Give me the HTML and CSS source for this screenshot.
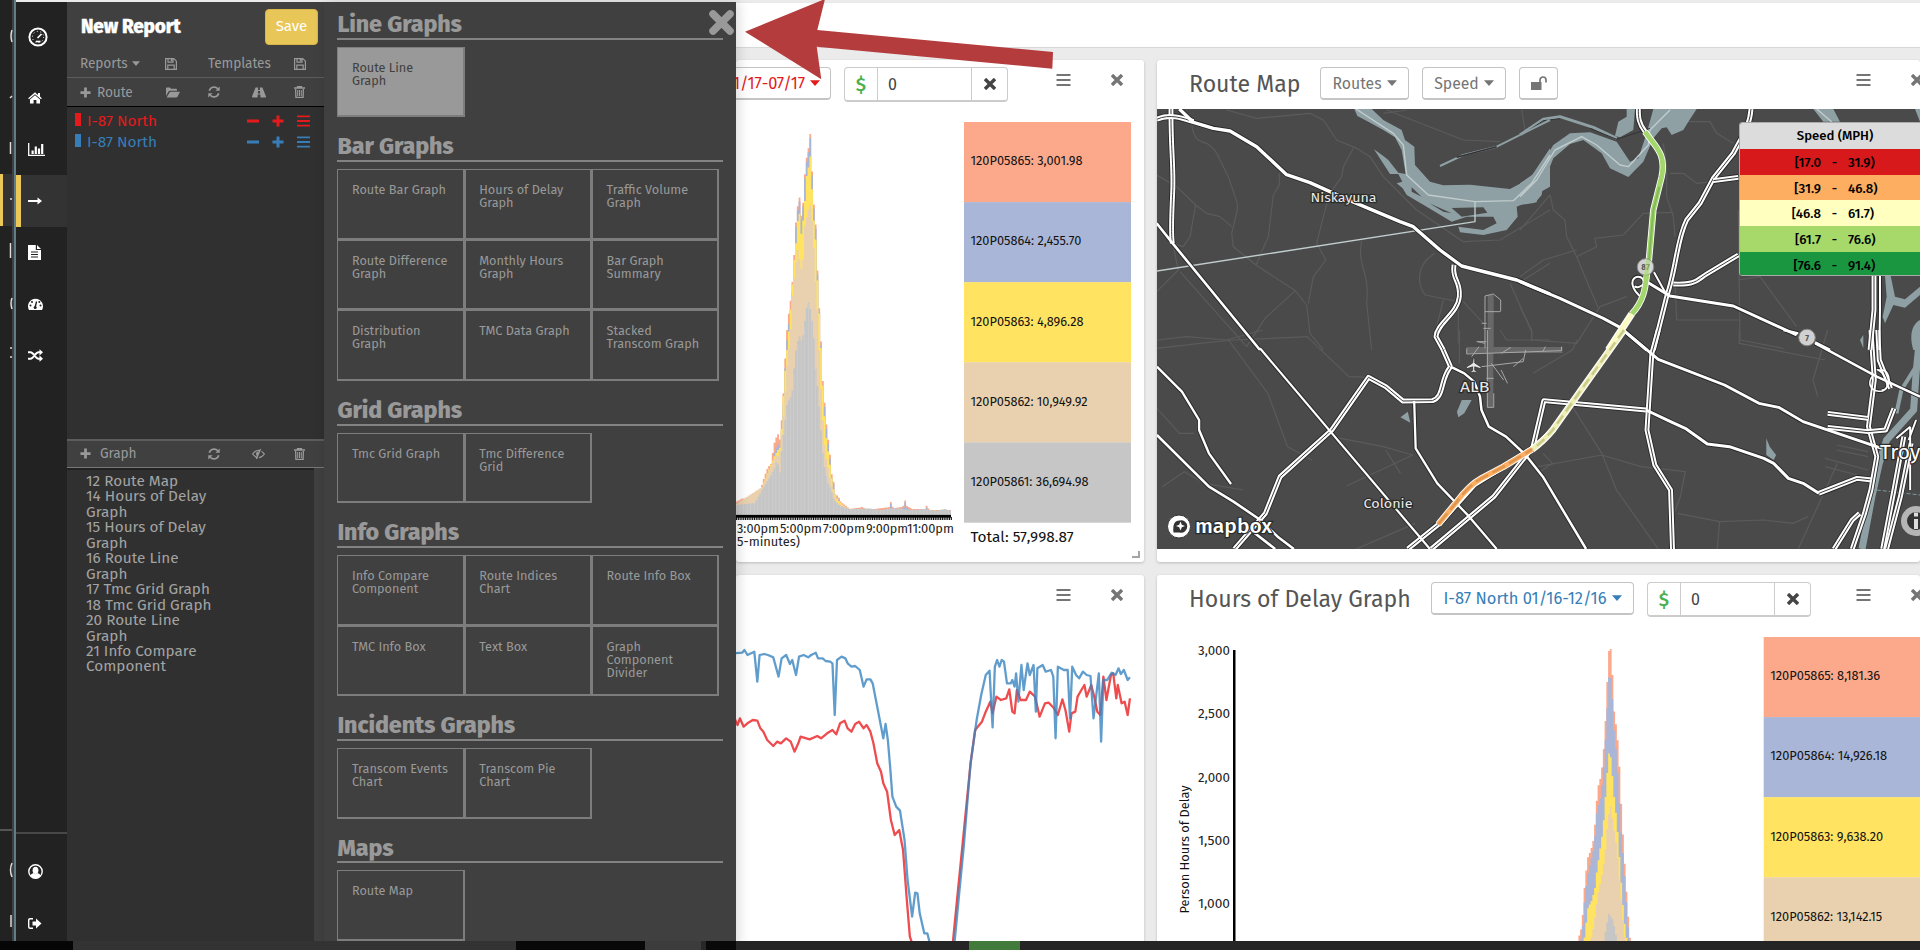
FILE: index.html
```html
<!DOCTYPE html>
<html lang="en">
<head>
<meta charset="utf-8">
<title>New Report</title>
<link rel="stylesheet" href="styles.css">
</head>
<body>
<svg class="defs" width="0" height="0">
  <symbol id="times" viewBox="0 0 12 12"><path d="M2.2 2.2 9.8 9.8M9.8 2.2 2.2 9.8" stroke="currentColor" stroke-width="3.4" stroke-linecap="square" fill="none"/></symbol>
  <symbol id="bars" viewBox="0 0 14 12"><path d="M0 1h14M0 6h14M0 11h14" stroke="currentColor" stroke-width="2"/></symbol>
  <symbol id="plus" viewBox="0 0 12 12"><path d="M6 .5v11M.5 6h11" stroke="currentColor" stroke-width="3"/></symbol>
  <symbol id="minus" viewBox="0 0 12 12"><path d="M0 6h12" stroke="currentColor" stroke-width="3"/></symbol>
  <symbol id="caret" viewBox="0 0 10 6"><path d="M0 .3h10L5 6z" fill="currentColor"/></symbol>
  <symbol id="save" viewBox="0 0 12 12"><path d="M.6.6h8.2l2.6 2.6v8.2H.6zM3 .8v3.4h5V.8M2.8 11.2V7.2h6.4v4" fill="none" stroke="currentColor" stroke-width="1.2"/><path d="M5.8.8h1.6v2.6H5.8z" fill="currentColor"/></symbol>
  <symbol id="folder" viewBox="0 0 14 11"><path d="M0 9V1.4Q0 .5 1 .5h3l1 1.3h5q1 0 1 1v1H4Q3 3.800 2.400 4.800z M.6 10.500 3.500 5.500Q3.900 4.800 4.700 4.800H14L11.500 9.700Q11 10.500 10 10.500z" fill="currentColor"/></symbol>
  <symbol id="refresh" viewBox="0 0 12 12"><path d="M1.300 4.800A4.900 4.900 0 0 1 9.700 2.700M10.700 7.200A4.900 4.900 0 0 1 2.300 9.300" fill="none" stroke="currentColor" stroke-width="1.700"/><path d="M11.700.5v4.300H7.400zM.3 11.500V7.200h4.300z" fill="currentColor"/></symbol>
  <symbol id="road" viewBox="0 0 14 11"><path d="M3.600.5h2.600L6 3h2L7.800.5h2.600L14 9.500q.2 1-.8 1H8.500L8.300 7.500H5.700l-.2 3H.8q-1 0-.8-1zM6 4l-.2 2.500h2.400L8 4z" fill="currentColor" fill-rule="evenodd"/></symbol>
  <symbol id="trash" viewBox="0 0 11 12"><path d="M0 2h11M3.500 2V.7h4V2M1.600 3l.3 8.300h7.200L9.400 3" fill="none" stroke="currentColor" stroke-width="1.300"/><path d="M3.700 4v6M5.500 4v6M7.300 4v6" stroke="currentColor"/></symbol>
  <symbol id="eye" viewBox="0 0 13 10"><path d="M.6 5Q3.500 1.300 6.500 1.300T12.400 5Q9.500 8.700 6.500 8.700T.6 5z" fill="none" stroke="currentColor" stroke-width="1.200"/><path d="M4 5a2.500 2.500 0 0 1 3-2.400L5.500 7.300A2.500 2.500 0 0 1 4 5z" fill="currentColor"/><path d="M9.800-.2 5.700 10.200" stroke="#404040" stroke-width="1.300"/><path d="M8.500 0 4.400 10" stroke="currentColor" stroke-width="1.200"/></symbol>
  <symbol id="unlock" viewBox="0 0 16 14"><path d="M0 6h10.500v8H0z" fill="currentColor"/><path d="M9 6.500V4a3 3 0 0 1 6 0v2.600" fill="none" stroke="currentColor" stroke-width="1.700"/></symbol>
  <symbol id="clock" viewBox="0 0 20 20"><circle cx="10" cy="10" r="8.600" fill="none" stroke="currentColor" stroke-width="2"/><path d="M9.500 11 13.500 7" stroke="currentColor" stroke-width="1.600"/><path d="M8 14.500h4.500" stroke="currentColor" stroke-width="1.600"/><circle cx="10" cy="10" r="5.600" fill="none" stroke="currentColor" stroke-dasharray="1 2.500"/></symbol>
  <symbol id="home" viewBox="0 0 14 12"><path d="M7 .3 10 2.900V1h2v3.600L13.800 6.200l-.8 1L7 2.200 1 7.200l-.8-1zM7 3.200 12 7.400V11.500H8.400V8H5.600v3.500H2V7.400z" fill="currentColor"/></symbol>
  <symbol id="chart" viewBox="0 0 17 13"><path d="M.7 0v12.300H17" fill="none" stroke="currentColor" stroke-width="1.300"/><path d="M3.500 7.500h2.200V11H3.500zM6.700 3.500h2.200V11H6.700zM9.900 5.500h2.200V11H9.900zM13.100 1h2.200v10h-2.200z" fill="currentColor"/></symbol>
  <symbol id="arrow" viewBox="0 0 14 8"><path d="M0 2.900h9.500V.5L14 4 9.500 7.500V5.100H0z" fill="currentColor"/></symbol>
  <symbol id="file" viewBox="0 0 13 15"><path d="M0 0h7.800v5H13v10H0zM9 0l4 4H9zM3 6.500v1h7v-1zM3 9v1h7V9zM3 11.500v1h7v-1z" fill="currentColor" fill-rule="evenodd"/></symbol>
  <symbol id="dash" viewBox="0 0 15 12"><path d="M1 12A7.500 7.500 0 1 1 14 12z" fill="currentColor"/><path d="M7.200 9 8.600 3.500" stroke="#222" stroke-width="1.400"/><g fill="#222"><circle cx="7.200" cy="9.500" r="1.500"/><circle cx="2.500" cy="7.600" r="1"/><circle cx="4" cy="4" r="1"/><circle cx="12.500" cy="7.600" r="1"/><circle cx="11.300" cy="4" r="1"/></g></symbol>
  <symbol id="shuffle" viewBox="0 0 15 13"><path d="M0 3.300h2.500C6 3.300 7 9.700 10.500 9.700H12M0 9.700h2.500C6 9.700 7 3.300 10.500 3.300H12" fill="none" stroke="currentColor" stroke-width="2"/><path d="M11.500.2 15 3.300 11.500 6.400zM11.500 6.600 15 9.700l-3.500 3.100z" fill="currentColor"/></symbol>
  <symbol id="user" viewBox="0 0 15 15"><circle cx="7.500" cy="7.500" r="6.700" fill="none" stroke="currentColor" stroke-width="1.400"/><ellipse cx="7.500" cy="6.300" rx="2.900" ry="3.600" fill="currentColor"/><path d="M2.300 12Q3 9.300 5.500 9L7.500 10.200 9.500 9q2.500.3 3.200 3Q10 14.800 7.500 14.500T2.300 12z" fill="currentColor"/></symbol>
  <symbol id="exit" viewBox="0 0 14 11"><path d="M5 .7H2.200Q.7.700.7 2.200v6.600q0 1.500 1.500 1.500H5" fill="none" stroke="currentColor" stroke-width="1.400"/><path d="M4.500 3.500H8V.5l5.500 5L8 10.500v-3H4.500z" fill="currentColor"/></symbol>
</svg>

<div class="app">
  <div class="ghost">
    <i class="ghost-active"></i><i class="ghost-line"></i>
    <svg viewBox="0 0 15 950" width="15" height="950"><path d="M12 30q-2 6 0 12M12 96l-2 2M10.500 142v12M10 199h2M10.500 243v15M12 298q-2 5 0 11M10 348h2M10 357h2M12 863q-3 7 0 14M11 915v12" stroke="#ddd" stroke-width="1.500" fill="none"/></svg>
  </div>
  <nav class="rail">
    <a class="rail-item r-logo"><svg width="20" height="20"><use href="#clock"/></svg></a>
    <a class="rail-item"><svg width="14" height="12"><use href="#home"/></svg></a>
    <a class="rail-item"><svg width="17" height="13"><use href="#chart"/></svg></a>
    <a class="rail-item active"><svg width="14" height="8"><use href="#arrow"/></svg></a>
    <a class="rail-item"><svg width="13" height="15"><use href="#file"/></svg></a>
    <a class="rail-item"><svg width="15" height="12"><use href="#dash"/></svg></a>
    <a class="rail-item"><svg width="15" height="13"><use href="#shuffle"/></svg></a>
    <div class="rail-foot">
      <a class="rail-item"><svg width="15" height="15"><use href="#user"/></svg></a>
      <a class="rail-item"><svg width="14" height="11"><use href="#exit"/></svg></a>
    </div>
  </nav>

  <aside class="report">
    <div class="report-head"><h1>New Report</h1><button class="save">Save</button></div>
    <div class="tools t1"><span class="w-a">Reports <svg class="caret" width="8" height="5"><use href="#caret"/></svg></span><svg width="12" height="12"><use href="#save"/></svg><span class="w-b">Templates</span><svg width="12" height="12"><use href="#save"/></svg></div>
    <div class="tools t2"><span class="w-c"><svg width="11" height="11"><use href="#plus"/></svg><b>Route</b></span><svg class="g1" width="14" height="11"><use href="#folder"/></svg><svg class="g2" width="12" height="12"><use href="#refresh"/></svg><svg class="g3" width="14" height="11"><use href="#road"/></svg><svg width="11" height="12"><use href="#trash"/></svg></div>
    <div class="routes">
      <div class="route red"><i></i><span>I-87 North</span><svg width="12" height="12"><use href="#minus"/></svg><svg width="12" height="12"><use href="#plus"/></svg><svg width="13" height="12"><use href="#bars"/></svg></div>
      <div class="route blue"><i></i><span>I-87 North</span><svg width="12" height="12"><use href="#minus"/></svg><svg width="12" height="12"><use href="#plus"/></svg><svg width="13" height="12"><use href="#bars"/></svg></div>
    </div>
    <div class="tools t3"><span class="w-d"><svg width="11" height="11"><use href="#plus"/></svg><b>Graph</b></span><svg class="g2" width="12" height="12"><use href="#refresh"/></svg><svg class="g3" width="13" height="10"><use href="#eye"/></svg><svg width="11" height="12"><use href="#trash"/></svg></div>
    <div class="graphs">12 Route Map<br>14 Hours of Delay<br>Graph<br>15 Hours of Delay<br>Graph<br>16 Route Line<br>Graph<br>17 Tmc Grid Graph<br>18 Tmc Grid Graph<br>20 Route Line<br>Graph<br>21 Info Compare<br>Component</div>
  </aside>

  <section class="drawer">
    <svg class="close" width="27" height="27" viewBox="0 0 27 27"><path d="M5 5 22 22M22 5 5 22" stroke="#999" stroke-width="7.500" stroke-linecap="round"/></svg>
    <h2>Line Graphs</h2>
    <div class="tiles"><div class="tile on">Route Line<br>Graph</div></div>
    <h2>Bar Graphs</h2>
    <div class="tiles"><div class="tile">Route Bar Graph</div><div class="tile">Hours of Delay<br>Graph</div><div class="tile">Traffic Volume<br>Graph</div><div class="tile">Route Difference<br>Graph</div><div class="tile">Monthly Hours<br>Graph</div><div class="tile">Bar Graph<br>Summary</div><div class="tile">Distribution<br>Graph</div><div class="tile">TMC Data Graph</div><div class="tile">Stacked<br>Transcom Graph</div></div>
    <h2>Grid Graphs</h2>
    <div class="tiles"><div class="tile">Tmc Grid Graph</div><div class="tile">Tmc Difference<br>Grid</div></div>
    <h2>Info Graphs</h2>
    <div class="tiles"><div class="tile">Info Compare<br>Component</div><div class="tile">Route Indices<br>Chart</div><div class="tile">Route Info Box</div><div class="tile">TMC Info Box</div><div class="tile">Text Box</div><div class="tile">Graph<br>Component<br>Divider</div></div>
    <h2>Incidents Graphs</h2>
    <div class="tiles"><div class="tile">Transcom Events<br>Chart</div><div class="tile">Transcom Pie<br>Chart</div></div>
    <h2>Maps</h2>
    <div class="tiles"><div class="tile">Route Map</div></div>
  </section>

  <main class="main">
    <div class="topbar"></div>
    <div class="board">
      <article class="card left">
        <header class="c1"><button class="drop red clip"><span>1/17-07/17</span><svg width="10" height="6"><use href="#caret"/></svg></button>
          <div class="group"><span class="usd">$</span><span class="num">0</span><span class="clr"><svg width="12" height="12"><use href="#times"/></svg></span></div>
          <div class="acts"><svg width="15" height="12"><use href="#bars"/></svg><svg width="12" height="12"><use href="#times"/></svg></div></header>
        <svg id="chart1" class="fill" width="408" height="453" viewBox="736 109 408 453"></svg>
      </article>
      <article class="card right">
        <header class="c2"><h3 class="h-map">Route Map</h3><button class="drop routes-b"><span>Routes</span><svg width="10" height="6"><use href="#caret"/></svg></button><button class="drop speed-b"><span>Speed</span><svg width="10" height="6"><use href="#caret"/></svg></button><button class="drop lock-b"><svg width="16" height="14"><use href="#unlock"/></svg></button>
          <div class="acts"><svg width="15" height="12"><use href="#bars"/></svg><svg width="12" height="12"><use href="#times"/></svg></div></header>
        <div class="map">
          <svg id="map" class="fill" width="763" height="440" viewBox="1157 109 763 440"></svg>
          <div class="speed"><div class="sp-h">Speed (MPH)</div>
            <div class="sp s1"><span>[17.0</span><i>-</i><span>31.9)</span></div>
            <div class="sp s2"><span>[31.9</span><i>-</i><span>46.8)</span></div>
            <div class="sp s3"><span>[46.8</span><i>-</i><span>61.7)</span></div>
            <div class="sp s4"><span>[61.7</span><i>-</i><span>76.6)</span></div>
            <div class="sp s5"><span>[76.6</span><i>-</i><span>91.4)</span></div></div>
        </div>
      </article>
      <article class="card left">
        <header class="c1"><div class="acts"><svg width="15" height="12"><use href="#bars"/></svg><svg width="12" height="12"><use href="#times"/></svg></div></header>
        <svg id="chart3" class="fill" width="408" height="326" viewBox="736 624 408 326"></svg>
      </article>
      <article class="card right">
        <header class="c2"><h3 class="h-delay">Hours of Delay Graph</h3><button class="drop blue delay-b"><span>I-87 North 01/16-12/16</span><svg width="10" height="6"><use href="#caret"/></svg></button>
          <div class="group"><span class="usd">$</span><span class="num">0</span><span class="clr"><svg width="12" height="12"><use href="#times"/></svg></span></div>
          <div class="acts"><svg width="15" height="12"><use href="#bars"/></svg><svg width="12" height="12"><use href="#times"/></svg></div></header>
        <svg id="chart2" class="fill" width="763" height="326" viewBox="1157 624 763 326"></svg>
      </article>
    </div>
  </main>
</div>
<div class="taskbar"><i class="b1"></i><i class="b2"></i><i class="b3"></i><i class="b4"></i><i class="b5"></i><i class="b6"></i><i class="b7"></i><i class="b8"></i></div>
<svg class="pointer" width="340" height="90" viewBox="740 0 340 90"><path d="M745 31.700 825-1 817.300 30 1053 52 1052.300 68.700 816.700 46.700 821.300 79.300z" fill="#b43c3c"/></svg>
<script src="app.js"></script>
</body>
</html>
```
FILE: styles.css
```css
* { box-sizing: border-box; }
body { margin: 0; width: 1920px; height: 950px; overflow: hidden; background: #ebebeb; font-family: "Fira Sans", "Noto Sans", sans-serif; position: relative; }
h1, h2, h3 { margin: 0; }
svg { display: block; flex: none; }
.defs { position: absolute; }
button { font-family: inherit; margin: 0; }
.app { display: flex; height: 950px; padding-top: 2px; }
.ghost { width: 16px; background: #222; border-right: 2px solid #5f7d8b; box-shadow: inset -2px 0 #404040; position: relative; margin-top: -2px; overflow: hidden; }
.ghost svg { position: absolute; left: 0; top: 0; }
.ghost-active { position: absolute; left: 0; top: 174px; width: 12px; height: 52px; background: #333; border-left: 3px solid #ecc859; }
.ghost-line { position: absolute; left: 0; top: 829px; width: 12px; height: 2px; background: #555; }
.rail { width: 51px; background: #222; color: #fff; display: flex; flex-direction: column; }
.rail-item { height: 51.500px; padding-left: 12px; display: flex; align-items: center; flex: none; }
.r-logo { height: 70px; }
.active { background: #333; border-left: 5px solid #ecc859; padding-left: 7px; }
.rail-foot { margin-top: auto; height: 118px; border-top: 2px solid #484848; padding-top: 12px; }
.report { width: 257px; background: #303030; display: flex; flex-direction: column; color: #999; }
.report-head { height: 48px; background: #404040; display: flex; align-items: center; padding: 0 6px 8px 14px; justify-content: space-between; }
.report-head h1 { font-size: 19px; font-weight: 800; color: #fff; letter-spacing: -.2px; padding-top: 9px; white-space: nowrap; -webkit-text-stroke: .3px #fff; }
.save { width: 53px; height: 36px; margin-top: 9px; border: 1px solid #d9b64a; border-radius: 4px; background: #e9c658; color: #fff; font-size: 15px; font-weight: 400; padding: 0 0 2px; }
.tools { background: #404040; display: flex; align-items: center; font-size: 13.700px; padding: 0 19px 0 13px; letter-spacing: -.1px; }
.tools b { font-weight: 400; }
.tools span { display: flex; align-items: center; }
.t1 { height: 28px; border-bottom: 1.500px solid #5c5c5c; }
.t1 .caret { margin-left: 4px; }
.t1 > svg:last-child { margin-left: auto; margin-right: -1px; }
.w-a { width: 85px; }
.w-b { margin-left: 31px; }
.t2 { height: 29px; border-bottom: 1.500px solid #000; }
.w-c { width: 86px; gap: 6px; }
.w-d { width: 128px; gap: 9px; }
.g1 { margin-right: 28px; }
.g2 { margin-right: 32px; }
.tools > svg:last-child { margin-left: auto; }
.routes { height: 332px; padding: 3px 14px 0 8px; }
.route { display: flex; align-items: center; height: 21px; font-size: 15.400px; gap: 13px; }
.route i { width: 6px; height: 13px; background: currentColor; margin-right: -7px; margin-top: -2px; }
.route span { width: 147px; white-space: nowrap; }
.red { color: #e41a1c; }
.blue { color: #377eb8; }
.t3 { height: 29px; border-top: 2px solid #5c5c5c; border-bottom: 1.500px solid #777; padding-bottom: 1px; }
.graphs { flex: 1; padding: 6px 0 0 19px; font-size: 15.300px; line-height: 15.450px; color: #a3a3a3; border-right: 10px solid #404040; box-shadow: inset 0 2px #222; }
.drawer { width: 412px; background: #404040; padding-left: 13.400px; color: #999; position: relative; z-index: 2; box-shadow: 2px 0 12px rgba(0,0,0,.16); }
.drawer h2 { width: 386px; height: 44.700px; padding-top: 16px; margin-bottom: 7px; border-bottom: 2.500px solid #838383; font-size: 23.300px; line-height: 27px; font-weight: 800; letter-spacing: -.1px; white-space: nowrap; }
.drawer h2:first-of-type { height: 37.700px; padding-top: 9px; }
.close { position: absolute; left: 384px; top: 7px; }
.tiles { display: flex; flex-wrap: wrap; width: 383px; }
.tile { width: 127.330px; height: 70.670px; border: solid #7d7d7d; border-width: 1px 2px 2px 1px; padding: 13px 0 0 13.500px; font-size: 12.700px; line-height: 13px; white-space: nowrap; }
.on { background: #999; color: #404040; }
.main { flex: 1; min-width: 0; }
.topbar { height: 46px; background: #fff; border-bottom: 1.500px solid #d8d8d8; border-top: 1px solid #e8e8e8; }
.board { display: grid; grid-template-columns: 408px 763px; grid-template-rows: 502px 375px; gap: 13px; padding-top: 12px; }
.card { background: #fff; border-radius: 3px; box-shadow: 0 1px 3px rgba(0,0,0,.2); overflow: hidden; }
.card header { display: flex; align-items: center; height: 49px; position: relative; padding-bottom: 2px; }
.card h3 { font-weight: 400; font-size: 23.100px; color: #555; margin-left: 32px; padding-top: 1px; white-space: nowrap; }
.drop { height: 33px; border: 1px solid #c4c4c4; border-bottom-width: 2px; border-radius: 4px; background: #fff; font-size: 15.800px; color: #757575; display: flex; align-items: center; justify-content: center; gap: 5px; padding: 0; white-space: nowrap; overflow: hidden; }
.drop.red { color: #e41a1c; }
.drop.blue { color: #377eb8; }
.clip { width: 95px; border-left: 0; border-radius: 0 4px 4px 0; justify-content: flex-end; padding-right: 10px; font-size: 16.400px; letter-spacing: -.1px; }
.h-map { width: 131px; }
.h-delay { width: 242px; }
.routes-b { width: 89px; }
.speed-b { width: 84px; margin-left: 13px; }
.lock-b { width: 39px; margin-left: 13px; }
.delay-b { width: 203px; font-size: 16.500px; }
.group { display: flex; width: 164px; height: 35px; margin-left: 13px; margin-top: 2px; border: 1px solid #ccc; border-bottom-width: 2px; border-radius: 4px; font-size: 16px; color: #444; align-items: stretch; }
.group span { display: flex; align-items: center; }
.usd { width: 33px; justify-content: center; color: #4cb050; font-size: 19px; border-right: 1px solid #ccc; font-weight: 500; }
.num { flex: 1; padding-left: 10px; }
.clr { width: 36px; justify-content: center; border-left: 1px solid #ccc; }
.acts { display: flex; gap: 40px; align-items: center; color: #757575; position: absolute; top: 14px; }
.c1 .acts { left: 320px; }
.c2 .acts { left: 699px; }
.fill { display: block; }
.map { position: relative; height: 440px; background: #4a4a4a; }
.speed { position: absolute; left: 582px; top: 13px; width: 192px; height: 154px; border: 1px solid #aaa; border-radius: 3px; overflow: hidden; font-size: 13.200px; font-weight: 500; color: #000; }
.sp-h { height: 26px; background: #dcdcdc; text-align: center; line-height: 26px; }
.sp { height: 25.700px; display: grid; grid-template-columns: 81px 27px 60px; line-height: 27px; }
.sp span:first-child { text-align: right; }
.sp i { font-style: normal; text-align: center; }
.s1 { background: #d7191c; } .s2 { background: #fdae61; } .s3 { background: #ffffbf; } .s4 { background: #a6d96a; } .s5 { background: #1a9641; }
.taskbar { position: absolute; left: 0; top: 941px; width: 1920px; height: 9px; display: flex; z-index: 3; }
.b1 { width: 73px; background: #060606; } .b2 { width: 443px; background: #333; } .b3 { width: 129px; background: #080808; } .b4 { width: 56px; background: #3c3c3c; } .b5 { width: 5px; background: #282828; } .b6 { width: 30px; background: #090909; }
.b7 { width: 233px; background: #252525; } .b8 { flex: 1; background: linear-gradient(90deg, #417a3b 51px, #252525 51px); }
.pointer { position: absolute; left: 740px; top: 0; z-index: 4; }
text { font-family: "Fira Sans", "Noto Sans", sans-serif; }
.g-road { fill: none; vector-effect: non-scaling-stroke; stroke-linejoin: round; }
```
FILE: app.js
```js
const NS = 'http://www.w3.org/2000/svg';
function el(parent, tag, attrs, text) {
  const n = document.createElementNS(NS, tag);
  for (const k in attrs) n.setAttribute(k, attrs[k]);
  if (text) n.textContent = text;
  parent.appendChild(n);
  return n;
}
function label(p, x, y, s, size, len, extra) {
  el(p, 'text', Object.assign({ x: x, y: y, 'font-size': size, textLength: len, lengthAdjust: 'spacingAndGlyphs' }, extra || {}), s);
}
function interp(pts, x) {
  if (x <= pts[0][0]) return pts[0][1];
  for (let i = 1; i < pts.length; i++) {
    if (x <= pts[i][0]) {
      const a = pts[i - 1], b = pts[i];
      return a[1] + (b[1] - a[1]) * (x - a[0]) / (b[0] - a[0]);
    }
  }
  return pts[pts.length - 1][1];
}
const COLORS = ['#fca98b', '#a9b6d7', '#ffe361', '#e9d1af', '#c6c6c6'];
function bars(svg, layers, x0, x1, step, base) {
  layers.forEach((pts, i) => {
    let d = 'M' + x0 + ' ' + base;
    for (let x = x0; x < x1; x += step) {
      const y = Math.min(base, interp(pts, x + step / 2));
      d += 'V' + y.toFixed(1) + 'H' + Math.min(x1, x + step).toFixed(2);
    }
    el(svg, 'path', { d: d + 'V' + base + 'Z', fill: COLORS[i] });
  });
}
function legend(svg, x, y, w, rows) {
  rows.forEach((r, i) => {
    el(svg, 'rect', { x: x, y: y + i * 80.1, width: w, height: 80.3, fill: COLORS[i] });
    label(svg, x + 6.5, y + 43.3 + i * 80.1, r[0], 12.5, r[1], { fill: '#111' });
  });
}

const c1 = document.getElementById('chart1');
const total = [[736,502],[743,498],[748,502],[752,503],[755,500],[757,498],[759,493],[762,485],[764,478],[768,467],[771,464],[773,451],[775,440],[778,434],[780,440],[781,429],[783,402],[785,362],[787,330],[789,312],[791,298],[792,287],[793.5,267],[796,222],[798,204],[799.5,197],[801,218],[803,205],[804.5,178],[807,155],[809,146],[809.8,134],[811,134],[812,170],[814,207],[816,228],[817.5,272],[819,304],[821,341],[823,385],[825,407],[827,432],[829,445],[831,465],[832,477],[834,483],[835,494],[838,496],[841,502],[846,506],[850,509],[863,507],[866,510],[883,508],[890,507],[891,501],[893,508],[903,507],[905,500],[907,506],[912,509],[925,509],[927,505],[929,510],[951,510]];
const blueTop = total.map(p => [p[0], p[1] + (p[1] < 480 ? (p[0] < 796 ? 10 : 4) : 2)]);
const yellow = [[736,504],[755,502],[762,487],[772,462],[775,455],[778,450],[780,448],[782,425],[784,385],[787,350],[788.5,335],[790,318],[792,290],[794,262],[796,243],[798,218],[799.5,213],[801,236],[803,222],[805,200],[807,172],[809,166],[810.5,155],[812,188],[814,223],[816,243],[818,295],[820,325],[822,370],[824,408],[826,435],[828,450],[830,465],[832,480],[834,492],[838,500],[843,505],[850,510],[951,511]];
const tan = [[736,504],[762,487],[772,464],[777,454],[779,458],[782,432],[784,410],[786,380],[788,353],[790,343],[791,320],[792,300],[794,280],[796,262],[798,248],[801,270],[803,262],[805,225],[808,212],[810,203],[812,220],[814,250],[816,288],[818,318],[820,370],[822,407],[824,440],[826,457],[828,467],[830,478],[833,491],[837,502],[850,510],[951,511]];
const gray = [[736,505],[755,503],[762,490],[770,477],[774,470],[777,460],[780,473],[782,447],[784,430],[787,405],[789,400],[792,395],[794,370],[796,350],[799,335],[802,342],[804,330],[806,310],[809,301],[812,320],[814,340],[816,375],[818,390],[821,430],[823,455],[825,470],[828,483],[831,490],[834,500],[840,506],[850,509],[870,508.500],[880,510],[895,508],[910,510],[925,509],[935,511],[945,509],[951,511]];
bars(c1, [total, blueTop, yellow, tan, gray], 736, 951, 1.79, 514);
for (let x = 736; x < 951; x += 3.6) el(c1, 'rect', { x: x, y: interp(gray, x), width: 0.5, height: 514 - interp(gray, x), fill: '#d2d2d2' });
el(c1, 'rect', { x: 736, y: 514.7, width: 215, height: 3, fill: '#000' });
for (let x = 736; x < 951; x += 1.79) el(c1, 'rect', { x: x, y: 517, width: 1.1, height: 3, fill: '#111' });
[['3:00pm',737,42],['5:00pm',780,42],['7:00pm',823,42],['9:00pm',866,42],['11:00pm',907,47]].forEach(t => label(c1, t[1], 532.5, t[0], 12.8, t[2], { fill: '#222' }));
label(c1, 737, 545.5, '5-minutes)', 12.8, 63, { fill: '#222' });
legend(c1, 964, 122, 167, [['120P05865: 3,001.98',112],['120P05864: 2,455.70',111],['120P05863: 4,896.28',113],['120P05862: 10,949.92',117],['120P05861: 36,694.98',118]]);
label(c1, 970.5, 541.5, 'Total: 57,998.87', 15.4, 103, { fill: '#111' });
el(c1, 'path', { d: 'M1139 551v6h-7', fill: 'none', stroke: '#a5a5a5', 'stroke-width': 2 });

const c2 = document.getElementById('chart2');
bars(c2, [
  [[1577,946],[1578.5,938],[1582,926],[1585,880],[1588,857],[1591,850],[1594,838],[1597,797],[1598.5,785],[1600.5,778],[1603,760],[1605,730],[1606.6,700],[1608,660],[1609.2,649],[1610.8,649],[1612,664],[1614,710],[1616.5,728],[1618.7,750],[1621,800],[1623,835],[1626,885],[1629.5,935],[1632,950]],
  [[1578,950],[1582,936],[1585,895],[1588,873],[1591,860],[1594,848],[1597,810],[1600,800],[1603,778],[1606.6,722],[1608.5,680],[1610,671],[1612,690],[1614,728],[1617,760],[1619,795],[1621,830],[1624,865],[1627,910],[1629.5,945]],
  [[1583,950],[1585,933],[1588,908],[1592,900],[1595,888],[1597,870],[1600,850],[1603,830],[1606,790],[1608.5,755],[1610,750],[1612,770],[1614,795],[1617,822],[1619,850],[1621,880],[1624,918],[1628,950]],
  [[1589,950],[1594,925],[1598,895],[1602,875],[1605,855],[1608,820],[1610.5,805],[1613,822],[1617,850],[1620,885],[1623,920],[1626,950]],
  [[1603,950],[1606,928],[1609,914],[1613,920],[1616,935],[1618,950]]
], 1576.6, 1634, 1.75, 950);
el(c2, 'rect', { x: 1233, y: 650, width: 2.5, height: 300, fill: '#000' });
['3,000','2,500','2,000','1,500','1,000'].forEach((s, i) => label(c2, 1198, 655 + i * 63.3, s, 12.8, 32, { fill: '#222' }));
label(c2, 0, 0, 'Person Hours of Delay', 12.5, 128, { fill: '#111', transform: 'translate(1189 913.5) rotate(-90)' });
legend(c2, 1763.7, 637, 160, [['120P05865: 8,181.36',110],['120P05864: 14,926.18',117],['120P05863: 9,638.20',113],['120P05862: 13,142.15',112]]);

const c3 = document.getElementById('chart3');
const line = 'translate(730 600) scale(.7589 .33333)';
el(c3, 'polyline', { transform: line, class: 'g-road', stroke: '#ee4c4e', 'stroke-width': 2.3, points: '5,350 10,375 13,355 18,380 23,370 30,360 36,362 40,385 44,395 49,420 57,438 62,425 67,430 74,415 80,425 85,455 90,430 93,410 105,418 115,408 120,415 128,400 135,390 140,403 145,370 151,362 155,385 160,395 165,372 170,365 176,385 180,375 185,395 189,430 194,490 199,515 202,550 207,575 212,660 217,705 223,690 228,750 233,900 237,1010 243,1050 250,1200 285,1200 294,1020 300,880 307,720 317,490 323,390 332,365 337,335 343,305 346,340 351,290 357,300 364,295 368,268 372,335 375,340 378,270 383,300 390,300 395,275 402,290 408,350 415,310 420,308 427,325 432,345 438,298 442,330 447,395 450,340 455,335 458,290 463,270 467,255 470,290 476,255 480,290 484,335 488,345 492,230 496,300 502,225 505,220 509,295 511,255 516,310 520,305 524,345 527,295' });
el(c3, 'polyline', { transform: line, class: 'g-road', stroke: '#3a84bf', 'stroke-opacity': .8, 'stroke-width': 2.3, points: '5,160 16,158 19,150 23,165 32,155 36,245 39,165 45,162 50,165 57,172 64,230 68,175 74,165 79,192 82,180 87,225 91,170 97,165 103,172 107,165 113,158 116,175 122,175 126,183 132,185 135,190 138,345 141,180 147,170 152,175 155,190 160,200 165,198 171,210 176,260 180,238 185,238 188,250 194,320 202,415 205,372 208,420 211,500 214,590 219,620 224,632 230,720 234,840 240,950 244,878 247,880 250,940 256,1000 260,1000 265,1045 272,1200 288,1200 297,1000 302,880 308,740 313,600 317,490 325,360 331,285 337,225 342,212 346,382 349,200 352,180 355,200 358,180 361,185 365,250 370,250 372,240 375,260 377,220 380,305 384,195 387,270 392,190 395,225 400,195 403,335 405,205 412,195 416,215 423,210 426,230 429,415 432,200 440,210 445,210 448,355 451,200 456,225 460,235 465,215 470,225 475,228 479,355 486,220 489,425 492,240 497,240 503,218 508,225 512,205 515,222 519,210 524,240 527,232' });

// Map layers use three local grids that cover its upper left, upper right and lower part.
const map = document.getElementById('map');
const T = { A: 'translate(1150 50) scale(.33333)', B: 'translate(1520 50) scale(.33333)', C: 'translate(1150 330) scale(.49107 .33333)' };
function road(g, d, stroke, w, extra) {
  el(map, 'path', Object.assign({ d: d, transform: T[g], class: 'g-road', stroke: stroke, 'stroke-width': w }, extra || {}));
}
function area(g, d, fill) { el(map, 'path', { d: d, transform: T[g], fill: fill }); }
const WATER = '#8fa0a5', LAND = '#4a4a4a';
[['A','M125 220C130 270 150 275 170 280Q200 300 210 330L235 380 262 460V480L245 550 250 590 318 645 436 722 470 765 480 850 520 900'],['A','M20 375 80 410 137 465 170 490 210 500 245 530'],['A','M137 465 120 560 100 590 68 580 85 660 20 725'],['A','M388 370V405L370 435 355 560 318 645'],['A','M610 295 580 350 575 380 540 430 520 500 500 580 528 630 490 680 475 760'],['A','M230 180 320 205 480 190 520 210 560 270 620 295 660 320 700 380 800 480 940 575 1050 570 1200 480'],['A','M710 180 940 270 1050 275M1115 180 1125 240'],['A','M635 572C620 650 660 660 650 760L665 900'],['A','M90 665 290 890M436 722 345 805 290 890'],['A','M20 895 150 880 250 870 475 860'],['A','M855 610C800 640 800 700 825 735L925 755M880 750 860 830M925 755V880M1080 700 1145 845V870M940 755 1000 820M1050 840 1070 870H1200M1120 690 1200 640M770 180 700 190'],
['B','M0 540 90 435 100 480 135 510 140 560 170 620 235 775M170 620 230 590 225 565 310 555 370 490 460 487'],['B','M0 680 70 630 170 600M0 770 35 840V870L170 880 240 770 320 740'],['B','M430 280 440 350 440 440 460 500 465 560M450 370H490L530 400 580 395'],['B','M500 215 570 215 590 250 640 280M465 700 470 810H660M655 480 660 870 790 895M655 690 720 680 830 830'],
['C','M14 30 75 20 155 30 230 0M160 30 240 190 280 350 330 390M320 20 405 140 445 142'],['C','M370 320 475 350 535 375 400 468M480 360 510 430'],['C','M14 235 60 310 90 310M25 470 70 425 110 460 190 480M420 657 540 580'],['C','M860 230 920 370 950 480 1035 657M790 410 920 375 1000 410 1090 425 1080 500 1062 570'],['C','M1075 550 1160 575 1250 570 1310 580 1340 560M1160 575 1155 657M1380 0 1350 150 1360 200M1200 0V40L1375 90M1320 657 1400 400M780 130 860 60 870 30M630 0V100M800 370 820 400 790 430'],
['C','M1398 345 1462 365M1398 360 1462 380M1375 385 1462 420M1375 410 1440 435']
].forEach(r => road(r[0], r[1], '#5b5b5b', 1.2));
area('A','M613 177H665L700 210 755 240 765 270 793 290 795 345 840 395 880 406 960 404 1080 417 1140 385 1170 340 1200 295V410L1165 430 1160 457 1135 455 1100 470 1103 500 1070 540 1000 555 930 547 925 530 1000 540 1040 520 1030 500 950 500 905 515 830 470 770 435 758 415 740 400 757 395 745 372 720 372 672 298 700 318 715 330 745 368 767 372 755 300 735 262 700 240 655 215 622 198Z', WATER);
area('A','M905 474 1000 472 1012 488 935 500ZM785 412 815 440 785 425ZM838 460 905 490 880 485Z', LAND);
area('B','M0 400 50 365 100 285 150 250 210 247 290 275 330 335 355 325 380 250 400 177H530L505 215 490 240 455 255 440 232 425 235 400 265 370 335 325 381 270 355 245 310 190 270 150 282 100 325 70 400 65 435 45 458 0 465Z', WATER);
area('B','M320 177H345L340 240 300 262 285 258 295 215 320 200ZM880 177H940L960 215H910ZM1185 177H1200V215ZM1095 677H1112L1125 740 1155 748 1200 710V735L1155 773 1120 765 1095 820 1088 800 1100 740ZM1180 900C1165 850 1180 820 1200 810V900ZM1020 870 1030 855 1030 895Z', WATER);
area('C','M510 262 525 245 530 278ZM625 245 635 210 655 210 640 250 628 262ZM1255 325 1262 350 1275 375 1270 390 1255 375Z', WATER);
road('B','M0 255 70 208 120 200 220 232 290 265', WATER, 3);
road('B','M0 258 70 212 120 206M210 235 290 268 390 235', '#343434', 1);
road('A','M870 348 940 315 1040 290 1200 210', WATER, 2); road('A','M920 322 1040 290', '#333', 1.5);
road('C','M1568 10 1560 130 1555 240 1500 330 1485 400 1470 500 1450 657', WATER, 7);
road('C','M1568 90 1530 180 1520 250', WATER, 4);
road('A','M20 663 975 515V455L1090 452 1145 400 1200 315M618 177 730 250 760 285 770 375 835 435 975 455', '#c1cccd', 1.4);
road('B','M0 440 50 390 105 300 185 260 230 285 300 345 325 350 385 285 390 240 450 180M890 177 935 215', '#c1cccd', 1.4);
road('C','M1480 480 1568 495', '#7d969e', 1, { 'stroke-dasharray': '4 2' });
// airport
road('A','M1022 735V895', '#686868', 6); road('C','M645 60H840', '#686868', 6); road('C','M693 0V232', '#686868', 6);
road('A','M1005 895V738L1030 732 1052 750V785M1005 785H1050M995 820H1010M1000 835H1022M983 875 1005 880', '#a8a8a8', 1);
road('C','M645 55V72L838 62V50M687 0V232H700V190M665 35H685M670 50 655 80M675 110 760 95 765 60M740 110 760 85M715 120 728 160M695 100 720 150M715 70 735 52M800 65 805 50M685 145H700', '#a8a8a8', 1);
const D = [['A','M63 177C62 300 72 350 68 430S64 560 67 580'],['A','M20 208C60 190 100 205 130 215'],['A','M912 645C905 690 932 690 928 740S860 820 858 860L880 900'],
['C','M597 60 612 110M612 110C590 150 600 200 575 212L515 213 480 170 445 142 370 300 265 440 235 550 172 657'],
['C','M573 657 700 500 780 350 802 212 1010 240'],['B','M693 177C690 230 660 270 640 310L580 385 540 460 500 510C470 570 470 650 440 740L400 900'],
['C','M1035 0 1022 70 1012 300 1028 405 1060 480 1064 657'],['B','M580 392 655 382'],['B','M460 702C530 705 530 690 560 672L655 615'],['B','M355 177C355 200 355 220 377 247'],
['C','M1362 490 1440 445 1470 450'],['C','M525 657 590 580 660 465 720 410 780 355 820 300 965 0'],
['C','M1468 0 1475 150 1463 290 1480 380 1468 480 1455 550 1430 657'],['C','M1482 0 1485 90 1508 175'],['C','M1445 550 1430 570 1393 657'],['C','M1380 250 1462 265M1380 292 1462 305 1498 300 1515 235'],['C','M1535 320 1515 480 1492 657'],['C','M1550 340 1528 500 1500 657'],['B','M1062 677 1062 780 1050 900']];
const S = [['C','M1010 240 1060 275 1090 295 1135 342 1180 350 1250 385 1270 400 1300 445 1330 460 1362 490',3],['A','M88 177 130 217 190 235 240 243 320 290 410 374 480 398 600 452 750 515 790 530 870 600 935 648 1100 690 1200 732',3.4],['B','M0 695 120 745 250 805 300 832 380 900',3],['C','M957-8 1035 88 1170 165 1240 220 1280 232 1330 275 1490 355',2.8],['A','M20 520 68 580 330 900',2.6],['C','M224 55 570 657',2.2],['C','M612 110 640 130 660 155 672 200 675 240 690 290 725 320 765 375 800 440 888 657',2.5],['C','M538 213 541 355 585 460 650 560 706 657',2.3],['C','M14 110 65 185 100 270 100 300 120 370 165 462',2.4],['C','M14 315 120 470 170 515 225 570 260 620 293 657M205 600 255 657',2.6],['B','M380 695 450 738 640 768 830 855M885 878 930 900',3],['C','M1290 0 1320 10M1355 40 1480 140 1568 200',2.4],['B','M372 705C375 670 335 675 337 700 340 725 355 730 358 738M345 708C350 720 385 700 375 685M402 667 440 735',2],['C','M1470 140C1450 190 1510 200 1500 155S1470 120 1490 120 1510 180 1490 180',1.6],['C','M1548 290 1520 325M1548 290V480M1560 270 1545 330',2],['B','M1080 677 1080 780 1078 900',2]];
D.forEach(r => road(r[0], r[1], '#262626', 6.6));
S.forEach(r => road(r[0], r[1], '#262626', r[2] + 1.8));
D.forEach(r => { road(r[0], r[1], '#fff', 4.9); road(r[0], r[1], '#3a3a3a', 1); });
S.forEach(r => road(r[0], r[1], '#fff', r[2]));
// route, coloured by speed
const green = 'M335 792C385 740 375 680 385 650L400 480 425 380C440 310 405 290 375 245', pale = 'M965 0 820 300Q800 335 778 358', orange = 'M587 583 625 515Q650 465 675 445L720 410 778 358';
road('B', green, '#fff', 6.5); road('B', green, '#a3d76b', 4.8); road('B', 'M385 650 400 480 418 410', '#84b85a', 2);
road('C', pale, '#fff', 7); road('B', 'M335 792 265 900', '#fff', 7); road('C', pale, '#eeedb4', 4.6); road('B', 'M335 792 265 900', '#fbfac0', 4.6); road('C', pale, '#c9cb8a', 2.4, { 'stroke-dasharray': '10 5' });
road('C', orange, '#fff', 6.6); road('C', orange, '#fdae61', 4.8); road('C', orange, '#dd9550', 2.4, { 'stroke-dasharray': '14 5' });
function shield(x, y, s) { el(map, 'circle', { cx: x, cy: y, r: 8.3, fill: '#dcdcdc', stroke: '#888', 'stroke-width': 1, opacity: .93 }); el(map, 'text', { x: x, y: y + 3, 'font-size': 8, 'font-weight': 700, 'text-anchor': 'middle', fill: '#555' }, s); }
shield(1645.5, 267, '87'); shield(1807, 337.5, '7');
road('B', 'M376 690 385 630', '#a3d76b', 4.5, { opacity: .6 });
const halo = { fill: '#e8e8e8', stroke: '#2b2b2b', 'stroke-width': 2.4, 'paint-order': 'stroke' };
label(map, 1310.5, 202, 'Niskayuna', 13.4, 66, halo);
label(map, 1460, 391.5, 'ALB', 14.8, 29.5, halo);
label(map, 1363.500, 508, 'Colonie', 13.4, 49, halo);
el(map, 'text', Object.assign({ x: 1880, y: 459, 'font-size': 21 }, halo, { fill: '#fff' }), 'Troy');
el(map, 'path', { d: 'M1473.300 358q1.200-1 1.400 1v4l6.300 4v1.800l-6.300-2v3.500l2 1.500v1l-3-.8-3 .8v-1l2-1.500v-3.500l-6.300 2V367l6.300-4z', fill: '#e8e8e8', stroke: '#2b2b2b', 'stroke-width': .7 });
el(map, 'circle', { cx: 1179, cy: 526.5, r: 11.5, fill: '#fff', stroke: '#333' });
el(map, 'path', { d: 'M1173.500 532.500q-1.500-12 6-12a6.200 6.200 0 1 1 0 12z', fill: '#333' });
el(map, 'path', { d: 'M1180.500 521.500l1.300 3.200 3.200 1.300-3.200 1.300-1.300 3.200-1.300-3.200-3.200-1.300 3.200-1.300z', fill: '#fff' });
label(map, 1195, 532.5, 'mapbox', 20.5, 77, Object.assign({}, halo, { fill: '#fff', 'font-weight': 500 }));
el(map, 'circle', { cx: 1916, cy: 521, r: 12, fill: '#333', stroke: '#b5b5b5', 'stroke-width': 6 });
el(map, 'path', { d: 'M1914 519h4v10h-4zM1914 512.500h4v4h-4z', fill: '#ddd' });
```
